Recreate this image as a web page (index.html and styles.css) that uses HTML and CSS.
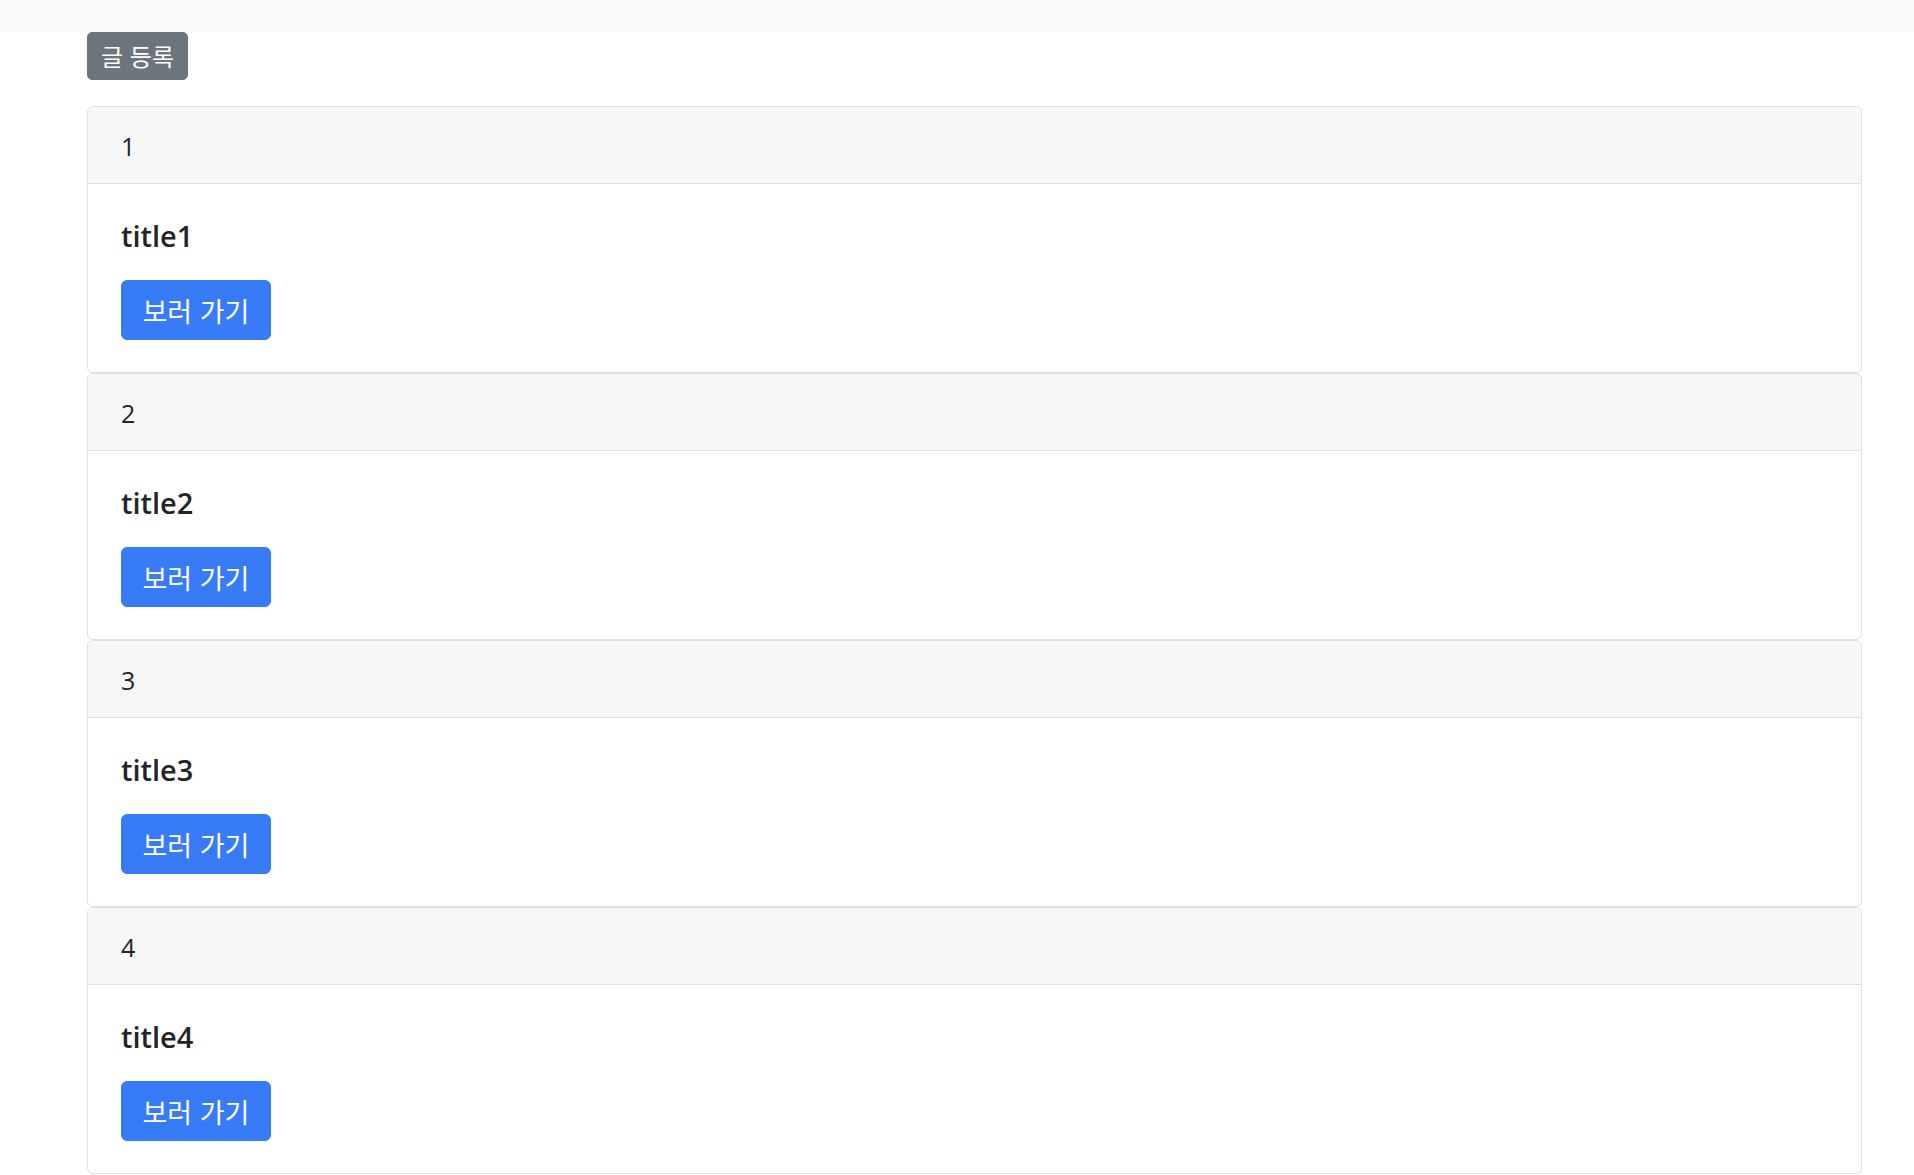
FILE: index.html
```html
<!DOCTYPE html>
<html lang="ko">
<head>
<meta charset="utf-8">
<title>글 목록</title>
<link rel="stylesheet" href="styles.css">
</head>
<body>
<div class="topbar"></div>
<main class="container">
  <button class="btn btn-secondary">글 등록</button>
  <div class="list">
    <div class="card">
      <div class="card-header">1</div>
      <div class="card-body">
        <h5 class="card-title">title1</h5>
        <a class="btn btn-primary btn-lg" href="#">보러 가기</a>
      </div>
    </div>
    <div class="card">
      <div class="card-header">2</div>
      <div class="card-body">
        <h5 class="card-title">title2</h5>
        <a class="btn btn-primary btn-lg" href="#">보러 가기</a>
      </div>
    </div>
    <div class="card">
      <div class="card-header">3</div>
      <div class="card-body">
        <h5 class="card-title">title3</h5>
        <a class="btn btn-primary btn-lg" href="#">보러 가기</a>
      </div>
    </div>
    <div class="card">
      <div class="card-header">4</div>
      <div class="card-body">
        <h5 class="card-title">title4</h5>
        <a class="btn btn-primary btn-lg" href="#">보러 가기</a>
      </div>
    </div>
  </div>
</main>
</body>
</html>
```

FILE: styles.css
```css
* { box-sizing: border-box; }
html, body { margin: 0; padding: 0; }
body {
  font-family: "Open Sans", "Noto Sans CJK KR", sans-serif;
  color: #212529;
  background: #fff;
}
.topbar {
  height: 32px;
  background: #f8f9fa;
}
.container {
  margin-left: 87px;
  width: 1775px;
  display: flex;
  flex-direction: column;
  align-items: flex-start;
}
.btn {
  display: inline-flex;
  align-items: center;
  justify-content: center;
  border: 1px solid transparent;
  color: #fff;
  text-decoration: none;
  font-family: "Noto Sans CJK KR", sans-serif;
  cursor: pointer;
  line-height: 1;
}
.btn-secondary {
  background: #6c757d;
  border-color: #6c757d;
  height: 48px;
  width: 101px;
  font-size: 24px;
  border-radius: 5px;
  padding: 0;
}
.list {
  margin-top: 26px;
  width: 100%;
  display: flex;
  flex-direction: column;
}
.card {
  border: 1px solid #dfdfdf;
  border-radius: 6px;
  height: 267px;
  display: flex;
  flex-direction: column;
  overflow: hidden;
}
.card-header {
  height: 77px;
  background: #f7f7f7;
  border-bottom: 1px solid #dfdfdf;
  padding: 2px 33px 0;
  display: flex;
  align-items: center;
  font-size: 25px;
  line-height: 1;
}
.card-body {
  padding: 34px 33px 32px;
  display: flex;
  flex-direction: column;
  align-items: flex-start;
}
.card-title {
  margin: 0 0 26px;
  font-size: 29px;
  font-weight: 600;
  line-height: 36px;
}
.btn-primary {
  background: #387bf6;
  border-color: #387bf6;
  width: 150px;
  height: 60px;
  font-size: 27px;
  border-radius: 6px;
}
```
